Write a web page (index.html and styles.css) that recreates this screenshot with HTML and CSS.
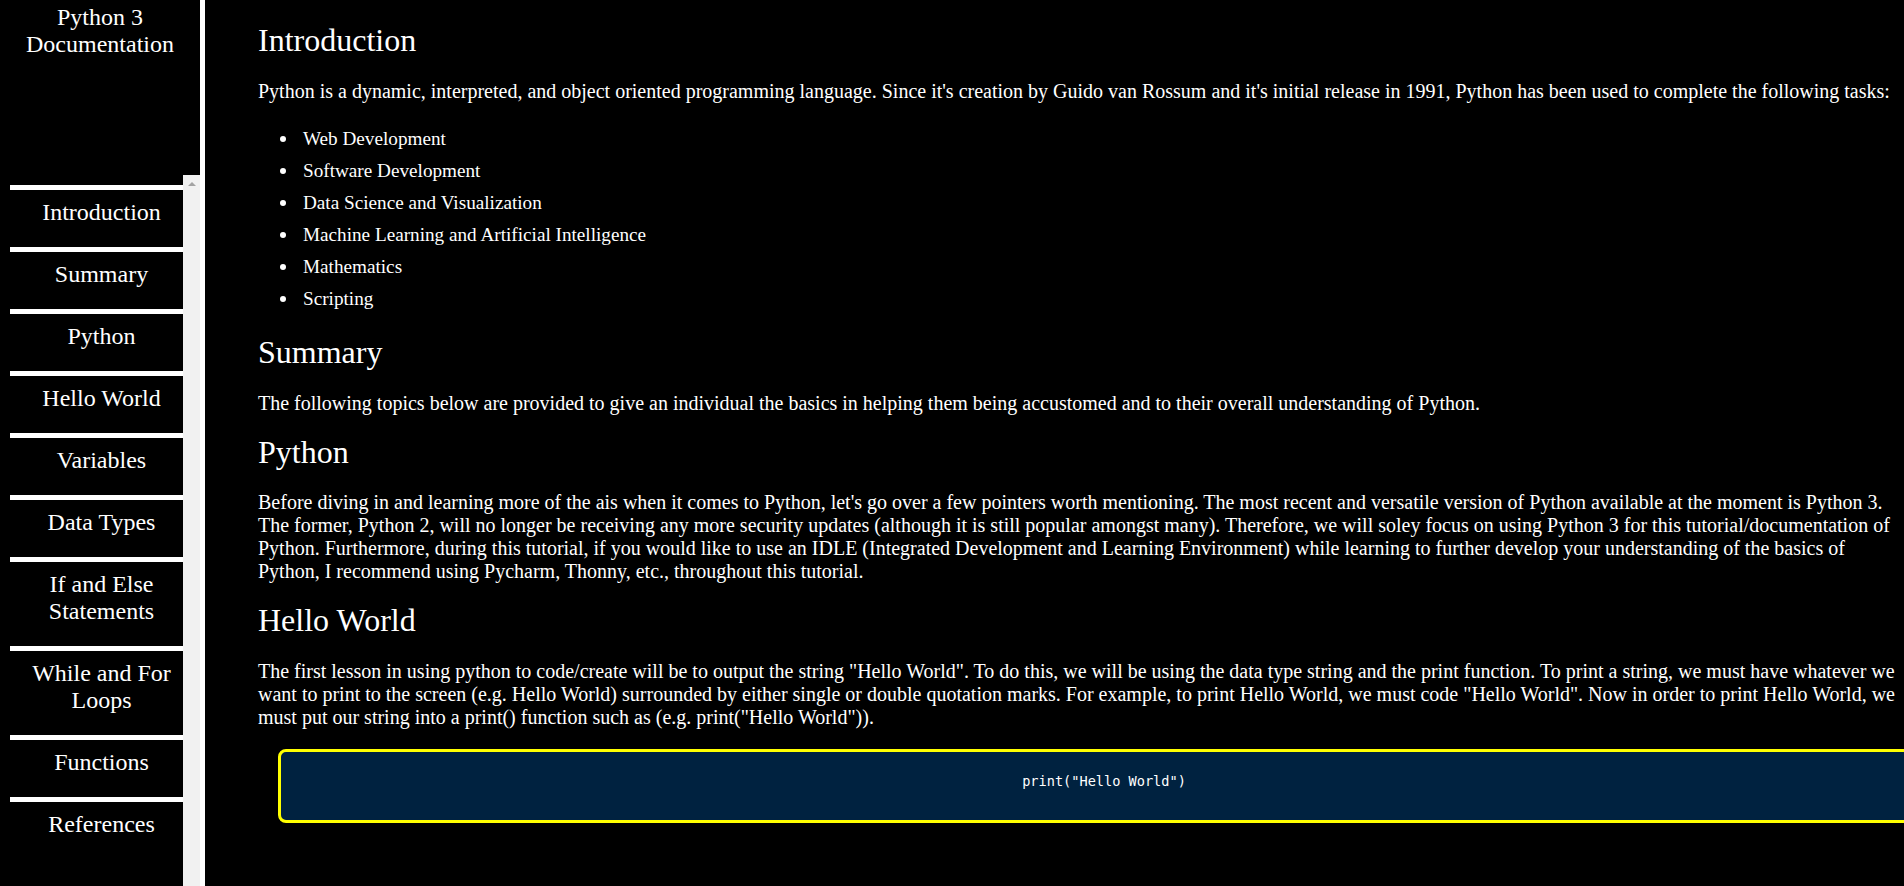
FILE: index.html
```html
<!DOCTYPE html>
<html lang="en">
<head>
<meta charset="utf-8">
<title>Python 3 Documentation</title>
<link rel="stylesheet" href="styles.css">
</head>
<body>
<div class="page">
  <nav class="sidebar" id="navbar">
    <header class="sidebar-title">Python 3 Documentation</header>
    <div class="nav-scroll">
      <ul class="nav-list">
        <li class="nav-item"><a class="nav-link" href="#Introduction">Introduction</a></li>
        <li class="nav-item"><a class="nav-link" href="#Summary">Summary</a></li>
        <li class="nav-item"><a class="nav-link" href="#Python">Python</a></li>
        <li class="nav-item"><a class="nav-link" href="#Hello_World">Hello World</a></li>
        <li class="nav-item"><a class="nav-link" href="#Variables">Variables</a></li>
        <li class="nav-item"><a class="nav-link" href="#Data_Types">Data Types</a></li>
        <li class="nav-item"><a class="nav-link" href="#If_and_Else_Statements">If and Else Statements</a></li>
        <li class="nav-item"><a class="nav-link" href="#While_and_For_Loops">While and For Loops</a></li>
        <li class="nav-item"><a class="nav-link" href="#Functions">Functions</a></li>
        <li class="nav-item"><a class="nav-link" href="#References">References</a></li>
      </ul>
      <div class="scrollbar"><span class="scroll-arrow"></span></div>
    </div>
  </nav>
  <main class="main" id="main-doc">
    <section class="main-section" id="Introduction">
      <h2 class="section-title">Introduction</h2>
      <p class="text">Python is a dynamic, interpreted, and object oriented programming language. Since it's creation by Guido van Rossum and it's initial release in 1991, Python has been used to complete the following tasks:</p>
      <ul class="task-list">
        <li class="task">Web Development</li>
        <li class="task">Software Development</li>
        <li class="task">Data Science and Visualization</li>
        <li class="task">Machine Learning and Artificial Intelligence</li>
        <li class="task">Mathematics</li>
        <li class="task">Scripting</li>
      </ul>
    </section>
    <section class="main-section" id="Summary">
      <h2 class="section-title">Summary</h2>
      <p class="text">The following topics below are provided to give an individual the basics in helping them being accustomed and to their overall understanding of Python.</p>
    </section>
    <section class="main-section" id="Python">
      <h2 class="section-title">Python</h2>
      <p class="text">Before diving in and learning more of the ais when it comes to Python, let's go over a few pointers worth mentioning. The most recent and versatile version of Python available at the moment is Python 3. The former, Python 2, will no longer be receiving any more security updates (although it is still popular amongst many). Therefore, we will soley focus on using Python 3 for this tutorial/documentation of Python. Furthermore, during this tutorial, if you would like to use an IDLE (Integrated Development and Learning Environment) while learning to further develop your understanding of the basics of Python, I recommend using Pycharm, Thonny, etc., throughout this tutorial.</p>
    </section>
    <section class="main-section" id="Hello_World">
      <h2 class="section-title">Hello World</h2>
      <p class="text">The first lesson in using python to code/create will be to output the string "Hello World". To do this, we will be using the data type string and the print function. To print a string, we must have whatever we want to print to the screen (e.g. Hello World) surrounded by either single or double quotation marks. For example, to print Hello World, we must code "Hello World". Now in order to print Hello World, we must put our string into a print() function such as (e.g. print("Hello World")).</p>
      <div class="code-box"><code class="code">print("Hello World")</code></div>
    </section>
  </main>
</div>
</body>
</html>
```

FILE: styles.css
```css
html, body {
  margin: 0;
  padding: 0;
  background: #000;
  color: #fff;
  font-family: "Liberation Serif", "Times New Roman", serif;
  overflow: hidden;
}

.page {
  display: flex;
  height: 100vh;
  overflow: hidden;
}

/* Sidebar */
.sidebar {
  flex: 0 0 200px;
  width: 200px;
  height: 100vh;
  border-right: 5px solid #fff;
  display: flex;
  flex-direction: column;
}

.sidebar-title {
  height: 175px;
  box-sizing: border-box;
  padding-top: 4px;
  text-align: center;
  font-size: 24px;
  line-height: 27px;
  color: #fff;
}

.nav-scroll {
  flex: 1;
  display: flex;
  min-height: 0;
}

.nav-list {
  flex: 1;
  list-style: none;
  margin: 0;
  padding: 10px 0 0 0;
}

.nav-item {
  margin-left: 10px;
  border-top: 5px solid #fff;
  padding: 9px 0 21px 10px;
  text-align: center;
  font-size: 24px;
  line-height: 27px;
}

.nav-link {
  color: #fff;
  text-decoration: none;
}

.scrollbar {
  flex: 0 0 17px;
  background: #f1f1f1;
  display: flex;
  justify-content: center;
  padding-top: 7px;
  box-sizing: border-box;
}

.scroll-arrow {
  width: 0;
  height: 0;
  border-left: 4px solid transparent;
  border-right: 4px solid transparent;
  border-bottom: 4px solid #a3a3a3;
}

/* Main */
.main {
  flex: 1;
  min-width: 0;
  padding: 3px 0 0 53px;
  font-size: 20px;
  line-height: 23px;
  overflow: hidden;
}

.section-title {
  font-size: 32px;
  font-weight: normal;
  line-height: 36.8px;
  margin: 19px 0 21px 0;
}

.text {
  margin: 19px 0;
}

.task-list {
  margin: 20px 0 19px 0;
  padding-left: 45px;
  list-style: none;
  font-size: 19.2px;
  line-height: 32px;
}

.task::before {
  content: "";
  display: inline-block;
  width: 6px;
  height: 6px;
  border-radius: 50%;
  background: #fff;
  margin-left: -23px;
  margin-right: 17px;
  vertical-align: 3px;
}

.code-box {
  margin: 20px 0 0 20px;
  width: 100%;
  background: #002240;
  border: 3px solid #ffff00;
  border-radius: 8px;
  text-align: center;
  padding: 19px 0 31px 0;
  line-height: 16px;
}

.code {
  font-family: "DejaVu Sans Mono", "Liberation Mono", monospace;
  font-size: 13.6px;
  line-height: 16px;
  color: #fff;
}
```
